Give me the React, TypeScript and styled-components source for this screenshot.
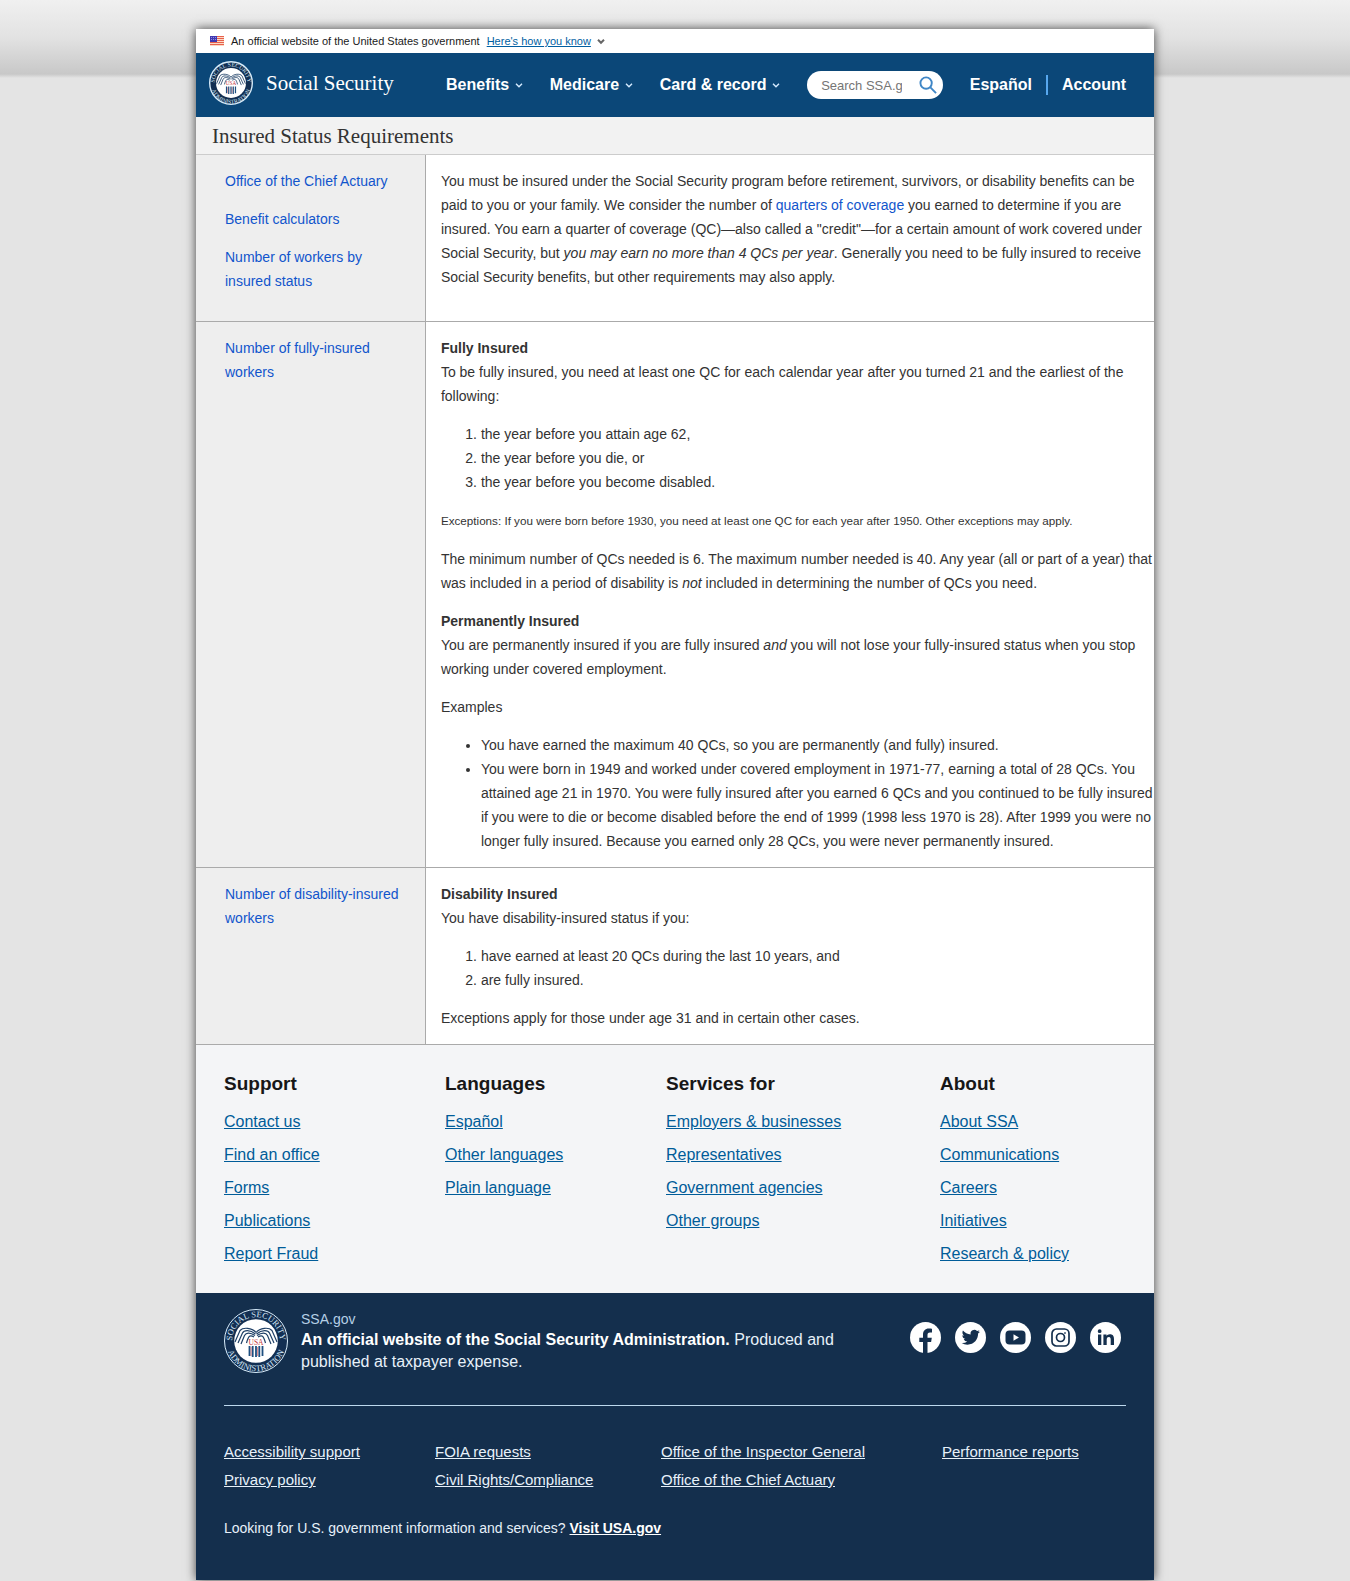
import React from "react";
import styled, { createGlobalStyle } from "styled-components";

const sans = '"Liberation Sans", Arial, sans-serif';
const serif = '"Liberation Serif", "Times New Roman", serif';

const GlobalStyle = createGlobalStyle`
  *, *::before, *::after { box-sizing: border-box; }
  body {
    margin: 0;
    color: #333;
    font: 14px/24px ${sans};
    background: #e4e4e4 linear-gradient(#f0f0f0, #e2e2e2 38px, #c8c8c8 74px, #e4e4e4 78px) no-repeat 0 0 / 100% 78px;
  }
  p, ul, ol { margin: 14px 0; }
  a { color: #1155cc; text-decoration: none; }
`;

const Page = styled.div`
  max-width: 958px;
  margin: 29px auto 1px;
  background: #fff;
  box-shadow: 0 0 10px #444;
`;

const Banner = styled.div`
  display: flex;
  align-items: center;
  gap: 7px;
  height: 24px;
  padding: 0 14px;
  font-size: 11px;
  line-height: 24px;
  color: #1b1b1b;
`;

const DisclosureButton = styled.button`
  display: flex;
  align-items: center;
  gap: 6px;
  padding: 0;
  border: 0;
  background: none;
  font: 11px/24px ${sans};
  color: #005ea2;
  cursor: pointer;
  span { text-decoration: underline; }
`;

const Header = styled.header`
  display: flex;
  align-items: center;
  min-height: 64px;
  padding: 0 28px 0 13px;
  color: #fff;
  background: #0b4778;
`;

const Brand = styled.a`
  display: flex;
  align-items: center;
  gap: 13px;
  width: 237px;
  padding-bottom: 4px;
  font: 21px/24px ${serif};
  color: #fff;
`;

const Nav = styled.nav`
  display: flex;
  flex: 1;
  align-items: center;
  justify-content: space-between;
`;

const MenuButton = styled.button`
  display: flex;
  align-items: center;
  gap: 6px;
  padding: 0;
  border: 0;
  background: none;
  font: bold 16px/24px ${sans};
  color: #fff;
  cursor: pointer;
`;

const Search = styled.form`
  display: flex;
  align-items: center;
  justify-content: space-between;
  width: 136px;
  height: 28px;
  padding: 0 6px 0 14px;
  border-radius: 14px;
  background: #fff;
`;

const SearchInput = styled.input`
  width: 81px;
  padding: 1px 0 0;
  border: 0;
  outline: 0;
  background: none;
  font: 13px/20px ${sans};
  color: #333;
  &::placeholder { color: #757575; }
`;

const SearchButton = styled.button`
  display: flex;
  padding: 0;
  border: 0;
  background: none;
  cursor: pointer;
`;

const AccountLinks = styled.div`
  display: flex;
  align-items: center;
  a {
    font: bold 16px/20px ${sans};
    color: #fff;
  }
  a + a {
    margin-left: 14px;
    padding-left: 14px;
    border-left: 2px solid #58a8ef;
  }
`;

const PageTitle = styled.h1`
  margin: 0;
  padding: 7px 16px 6px;
  border-bottom: 1px solid #ccc;
  font: 21px/24px ${serif};
  background: #f2f2f2;
`;

const Row = styled.section`
  display: grid;
  grid-template-columns: 24% minmax(0, 1fr);
  border-bottom: 1px solid #aaa;
`;

const Side = styled.aside<{ $roomy?: boolean }>`
  display: flow-root;
  padding: 0 14px ${(p) => (p.$roomy ? 14 : 0)}px 29px;
  border-right: 1px solid #aaa;
  background: #eee;
`;

const Main = styled.div`
  display: flow-root;
  padding-left: 15px;
`;

const List = styled.ul`
  padding-left: 40px;
`;

const FooterLinks = styled.div`
  display: grid;
  grid-template-columns: 221fr 221fr 274fr 186fr;
  padding: 27px 28px 18px;
  background: #f4f5f7;
`;

const ColumnTitle = styled.h2`
  margin: 0 0 14px;
  font: bold 19px/24px ${sans};
  color: #171717;
`;

const LinkList = styled.ul`
  margin: 0;
  padding: 0;
  list-style: none;
  li { height: 33px; }
  a {
    font-size: 16px;
    color: #005c99;
    text-decoration: underline;
  }
`;

const Identifier = styled.footer`
  padding: 16px 28px 40px;
  color: #e7f1fa;
  background: #142f4d;
`;

const Identity = styled.div`
  display: flex;
  align-items: flex-start;
  gap: 13px;
  padding-bottom: 32px;
  border-bottom: 1px solid #bdd9ee;
`;

const Statement = styled.div`
  flex: 1;
  font-size: 16px;
  line-height: 22px;
  small {
    display: block;
    font-size: 14px;
    line-height: 20px;
    color: #b5cfe6;
  }
  strong { color: #fff; }
`;

const Social = styled.div`
  display: flex;
  gap: 14px;
  padding: 13px 5px 0 40px;
  a { display: flex; }
`;

const RequiredLinks = styled.div`
  display: grid;
  grid-template-columns: 211fr 226fr 281fr 184fr;
  margin: 32px 0 22px;
  a {
    font-size: 15px;
    line-height: 28px;
    color: #e7f1fa;
    text-decoration: underline;
  }
`;

const UsaLine = styled.div`
  a {
    font-weight: bold;
    color: #fff;
    text-decoration: underline;
  }
`;

const Chevron = ({ color = "#d5ebff", weight = 1.4 }) => (
  <svg width="8" height="8" viewBox="0 0 8 8" fill="none" stroke={color} strokeWidth={weight} aria-hidden="true">
    <path d="M1 2.8 4 5.800 7 2.8" />
  </svg>
);

const Flag = () => (
  <svg width="14" height="10" viewBox="0 0 14 10" aria-hidden="true">
    <path fill="#fbd9c4" d="M0 0h14v10H0z" />
    <path stroke="#e8604c" strokeWidth="1" d="M0 .5h14M0 2.500h14M0 4.500h14M0 6.500h14M0 8.500h14" />
    <path fill="#4038b0" d="M0 0h7v6H0z" />
    <path stroke="#8c8de0" strokeDasharray="1 1" d="M1 1.500h5M1 3.500h5" />
  </svg>
);

const Seal = ({ size, id, ring }: { size: number; id: string; ring: number }) => (
  <svg width={size} height={size} viewBox="0 0 64 64" role="img" aria-label="Social Security Administration seal">
    <defs>
      <path id={`${id}-top`} d="M14 48 A24 24 0 1 1 50 48" />
      <path id={`${id}-bottom`} d="M4.300 20.600 A30 30 0 1 0 59.700 20.600" />
    </defs>
    <circle cx="32" cy="32" r={32 - ring / 2} fill="#132f52" stroke="#d9edfb" strokeWidth={ring} />
    <circle cx="32" cy="32" r="21.800" fill="#fff" />
    <g fill="#d3e6f6" fontFamily={serif} fontSize="8.500">
      <text textAnchor="middle"><textPath href={`#${id}-top`} startOffset="50%">SOCIAL SECURITY</textPath></text>
      <text textAnchor="middle"><textPath href={`#${id}-bottom`} startOffset="50%">ADMINISTRATION</textPath></text>
    </g>
    <g fill="none" stroke="#1e3f66" strokeWidth="1.200">
      <path d="M32 23.500C28 18.500 19 18 16 21.500L11 33M31.500 25C26 20.500 20 21 18.500 24L14 34M31 26.500C26 23 22 23.500 20.500 26.500L17 35M30 28C26 25.500 24.500 26.500 22.500 34" />
      <path d="M32 23.500C36 18.500 45 18 48 21.500L53 33M32.500 25C38 20.500 44 21 45.500 24L50 34M33 26.500C38 23 42 23.500 43.500 26.500L47 35M34 28C38 25.500 39.500 26.500 41.500 34" />
    </g>
    <text x="32" y="35.500" textAnchor="middle" fontFamily={serif} fontSize="7.500" fill="#c4363c">USA</text>
    <path stroke="#1e4f80" strokeWidth="1.800" d="M25.500 37v10M28.700 37v11M32 37v11M35.300 37v11M38.500 37v10" />
    <path stroke="#c4363c" strokeWidth=".6" d="M27.100 38v9M33.600 38v9" />
  </svg>
);

const socialIcons = [
  { name: "Facebook", art: <path fill="#142f4d" d="M13 31V20H9.300v-4.300H13v-3.200C13 8.700 15.300 6.400 18.800 6.400c1.300 0 2.700.2 3.200.3v3.700h-2c-2 0-2.500 1.200-2.500 2.500v2.800h4.300L21.100 20h-3.600v11z" /> },
  { name: "Twitter", art: <path fill="#142f4d" transform="translate(6.700 6.200) scale(.76)" d="M23.953 4.570a10 10 0 01-2.825.775 4.958 4.958 0 002.163-2.723c-.951.555-2.005.959-3.127 1.184a4.920 4.920 0 00-8.384 4.482C7.690 8.095 4.067 6.130 1.640 3.162a4.822 4.822 0 00-.666 2.475c0 1.710.870 3.213 2.188 4.096a4.904 4.904 0 01-2.228-.616v.06a4.923 4.923 0 003.946 4.827 4.996 4.996 0 01-2.212.085 4.936 4.936 0 004.604 3.417 9.867 9.867 0 01-6.102 2.105c-.390 0-.779-.023-1.170-.067a13.995 13.995 0 007.557 2.209c9.053 0 13.998-7.496 13.998-13.985 0-.210 0-.420-.015-.630A9.935 9.935 0 0024 4.590z" /> },
  { name: "YouTube", art: <><rect x="5.500" y="8.500" width="20" height="14" rx="4" fill="#142f4d" /><path fill="#fff" d="m13.500 12.300 5.500 3.200-5.500 3.200z" /></> },
  { name: "Instagram", art: <g fill="none" stroke="#142f4d" strokeWidth="1.700"><rect x="7" y="7" width="17" height="17" rx="4.500" /><circle cx="15.500" cy="15.500" r="4" /><circle cx="20" cy="11" r=".6" fill="#142f4d" strokeWidth=".6" /></g> },
  { name: "LinkedIn", art: <path fill="#142f4d" d="M8 12.500h3.300V23H8zM9.650 7.300a1.900 1.900 0 1 1 0 3.800 1.900 1.900 0 0 1 0-3.800zM13.400 12.500h3.100V14c.6-1 1.700-1.800 3.400-1.800 3.300 0 4.100 2.200 4.100 5V23h-3.300v-5.200c0-1.300-.1-2.800-1.800-2.800-1.700 0-2.200 1.300-2.200 2.700V23h-3.300z" /> },
];

const footerColumns = [
  { title: "Support", links: ["Contact us", "Find an office", "Forms", "Publications", "Report Fraud"] },
  { title: "Languages", links: ["Español", "Other languages", "Plain language"] },
  { title: "Services for", links: ["Employers & businesses", "Representatives", "Government agencies", "Other groups"] },
  { title: "About", links: ["About SSA", "Communications", "Careers", "Initiatives", "Research & policy"] },
];

const requiredLinks = [
  "Accessibility support", "FOIA requests", "Office of the Inspector General", "Performance reports",
  "Privacy policy", "Civil Rights/Compliance", "Office of the Chief Actuary",
];

export default function App() {
  return (
    <>
      <GlobalStyle />
      <Page>
        <Banner>
          <Flag />
          <span>An official website of the United States government</span>
          <DisclosureButton type="button">
            <span>Here's how you know</span>
            <Chevron color="#666" weight={2} />
          </DisclosureButton>
        </Banner>
        <Header>
          <Brand href="#">
            <Seal size={44} id="header-seal" ring={2} />
            Social Security
          </Brand>
          <Nav aria-label="Main">
            {["Benefits", "Medicare", "Card & record"].map((item) => (
              <MenuButton type="button" key={item}>{item}<Chevron /></MenuButton>
            ))}
            <Search role="search" onSubmit={(e) => e.preventDefault()}>
              <SearchInput type="text" aria-label="Search SSA.gov" placeholder="Search SSA.gov" />
              <SearchButton type="submit" aria-label="Search">
                <svg width="18" height="18" viewBox="0 0 19 19" fill="none" stroke="#3f86c6" strokeWidth="2" aria-hidden="true">
                  <circle cx="7.500" cy="7.500" r="6" />
                  <path d="m12 12 6 6" />
                </svg>
              </SearchButton>
            </Search>
            <AccountLinks>
              <a href="#">Español</a>
              <a href="#">Account</a>
            </AccountLinks>
          </Nav>
        </Header>
        <PageTitle>Insured Status Requirements</PageTitle>
        <main>
          <Row>
            <Side $roomy>
              <p><a href="#">Office of the Chief Actuary</a></p>
              <p><a href="#">Benefit calculators</a></p>
              <p><a href="#">Number of workers by insured status</a></p>
            </Side>
            <Main>
              <p>
                You must be insured under the Social Security program before retirement, survivors, or disability
                benefits can be paid to you or your family. We consider the number of{" "}
                <a href="#">quarters of coverage</a> you earned to determine if you are insured. You earn a quarter of
                coverage (QC)—also called a "credit"—for a certain amount of work covered under Social Security,
                but <em>you may earn no more than 4 QCs per year</em>. Generally you need to be fully insured to
                receive Social Security benefits, but other requirements may also apply.
              </p>
            </Main>
          </Row>
          <Row>
            <Side>
              <p><a href="#">Number of fully-insured workers</a></p>
            </Side>
            <Main>
              <p>
                <strong>Fully Insured</strong><br />
                To be fully insured, you need at least one QC for each calendar year after you turned 21 and the
                earliest of the following:
              </p>
              <List as="ol">
                <li>the year before you attain age 62,</li>
                <li>the year before you die, or</li>
                <li>the year before you become disabled.</li>
              </List>
              <p>
                <small>
                  Exceptions: If you were born before 1930, you need at least one QC for each year after 1950. Other
                  exceptions may apply.
                </small>
              </p>
              <p>
                The minimum number of QCs needed is 6. The maximum number needed is 40. Any year (all or part of a
                year) that was included in a period of disability is <em>not</em> included in determining the number
                of QCs you need.
              </p>
              <p>
                <strong>Permanently Insured</strong><br />
                You are permanently insured if you are fully insured <em>and</em> you will not lose your
                fully-insured status when you stop working under covered employment.
              </p>
              <p>Examples</p>
              <List>
                <li>You have earned the maximum 40 QCs, so you are permanently (and fully) insured.</li>
                <li>
                  You were born in 1949 and worked under covered employment in 1971-77, earning a total of 28 QCs.
                  You attained age 21 in 1970. You were fully insured after you earned 6 QCs and you continued to be
                  fully insured if you were to die or become disabled before the end of 1999 (1998 less 1970 is 28).
                  After 1999 you were no longer fully insured. Because you earned only 28 QCs, you were never
                  permanently insured.
                </li>
              </List>
            </Main>
          </Row>
          <Row>
            <Side>
              <p><a href="#">Number of disability-insured workers</a></p>
            </Side>
            <Main>
              <p>
                <strong>Disability Insured</strong><br />
                You have disability-insured status if you:
              </p>
              <List as="ol">
                <li>have earned at least 20 QCs during the last 10 years, and</li>
                <li>are fully insured.</li>
              </List>
              <p>Exceptions apply for those under age 31 and in certain other cases.</p>
            </Main>
          </Row>
        </main>
        <FooterLinks>
          {footerColumns.map((column) => (
            <div key={column.title}>
              <ColumnTitle>{column.title}</ColumnTitle>
              <LinkList>
                {column.links.map((link) => (
                  <li key={link}><a href="#">{link}</a></li>
                ))}
              </LinkList>
            </div>
          ))}
        </FooterLinks>
        <Identifier>
          <Identity>
            <Seal size={64} id="footer-seal" ring={1} />
            <Statement>
              <small>SSA.gov</small>
              <strong>An official website of the Social Security Administration.</strong> Produced and published at
              taxpayer expense.
            </Statement>
            <Social>
              {socialIcons.map((icon) => (
                <a href="#" aria-label={icon.name} key={icon.name}>
                  <svg width="31" height="31" viewBox="0 0 31 31" aria-hidden="true">
                    <circle cx="15.500" cy="15.500" r="15.500" fill="#fff" />
                    {icon.art}
                  </svg>
                </a>
              ))}
            </Social>
          </Identity>
          <RequiredLinks>
            {requiredLinks.map((link) => (
              <div key={link}><a href="#">{link}</a></div>
            ))}
          </RequiredLinks>
          <UsaLine>
            Looking for U.S. government information and services? <a href="#">Visit USA.gov</a>
          </UsaLine>
        </Identifier>
      </Page>
    </>
  );
}
